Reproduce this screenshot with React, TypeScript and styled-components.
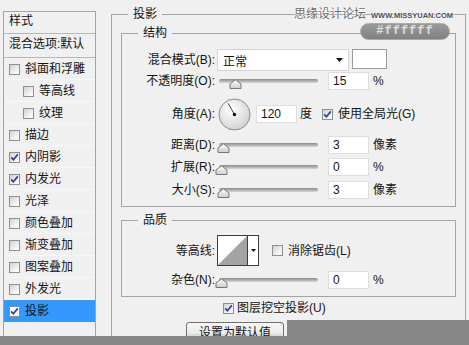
import React from "react";
import styled, { createGlobalStyle } from "styled-components";

const GlobalStyle = createGlobalStyle`
  * { box-sizing: border-box; }
  html, body { margin: 0; padding: 0; background: #f0f0f0; }
  body {
    font-family: "Liberation Sans", "Noto Sans CJK SC", sans-serif;
    font-size: 12px;
    color: #141414;
  }
`;

const Dialog = styled.div`
  position: relative;
  width: 469px;
  height: 345px;
  overflow: hidden;
  display: flex;
  flex-direction: column;
  background: #f0f0f0;
`;

const Body = styled.div`
  display: flex;
  align-items: flex-start;
  height: 336px;
  flex-shrink: 0;
  padding-left: 3px;
  overflow: hidden;
`;

const Footer = styled.div`
  flex: 1;
  background: #878787;
`;

// left list of effects
const EffectList = styled.div`
  flex-shrink: 0;
  width: 93px;
  height: 330px;
  margin-top: 11px;
  border: 1px solid #a3a3a3;
`;

const ListHead = styled.div<{ $h: number }>`
  height: ${(p) => p.$h}px;
  display: flex;
  align-items: center;
  padding: 0 0 3px 5px;
  border-bottom: 1px solid #b8b8b8;
  white-space: nowrap;
  line-height: 14px;
`;

const EffectRow = styled.div<{ $indent?: boolean; $active?: boolean }>`
  height: 22px;
  display: flex;
  align-items: center;
  gap: 5px;
  padding-left: ${(p) => (p.$indent ? 19 : 5)}px;
  background: ${(p) => (p.$active ? "#3399ff" : "transparent")};
  box-shadow: inset 0 -1px 0 ${(p) => (p.$active ? "#3399ff" : "#f7f7f7")};
  white-space: nowrap;
  line-height: 14px;
`;

const Box = styled.span<{ $white?: boolean; $ml?: number }>`
  flex-shrink: 0;
  width: 11px;
  height: 11px;
  margin-left: ${(p) => p.$ml ?? 0}px;
  border: 1px solid #8e8f8f;
  background: ${(p) =>
    p.$white ? "#ffffff" : "linear-gradient(135deg, #d2d2d2 0%, #f4f4f4 70%, #ffffff 100%)"};
  display: flex;
  align-items: center;
  justify-content: center;
`;

const CheckBox = ({ checked, white, ml }: { checked?: boolean; white?: boolean; ml?: number }) => (
  <Box $white={white} $ml={ml}>
    {checked && (
      <svg width="9" height="9" viewBox="0 0 9 9">
        <path d="M1.2 4.4 L3.4 6.8 L7.8 1.4" fill="none" stroke="#2c3f9e" strokeWidth="1.7" />
      </svg>
    )}
  </Box>
);

// right side: layer style options
const Group = styled.fieldset<{ $pad: string; $w: number; $mt?: number; $ml?: number; $h?: number }>`
  margin: ${(p) => p.$mt ?? 0}px 0 0 ${(p) => p.$ml ?? 0}px;
  min-width: 0;
  width: ${(p) => p.$w}px;
  ${(p) => (p.$h ? `height: ${p.$h}px;` : "")}
  flex-shrink: 0;
  border: 1px solid #a4a4a4;
  padding: ${(p) => p.$pad};
`;

const GroupTitle = styled.legend<{ $ml: number }>`
  margin-left: ${(p) => p.$ml}px;
  padding: 0 5px;
  height: 16px;
  line-height: 16px;
  white-space: nowrap;
`;

const FieldRow = styled.div<{ $h: number; $mt?: number }>`
  display: flex;
  align-items: center;
  height: ${(p) => p.$h}px;
  margin-top: ${(p) => p.$mt ?? 0}px;
  white-space: nowrap;
`;

const FieldLabel = styled.span`
  flex-shrink: 0;
  width: 93px;
  margin-right: 2px;
  text-align: right;
  line-height: 14px;
`;

const Select = styled.div`
  flex-shrink: 0;
  width: 132px;
  height: 22px;
  display: flex;
  align-items: center;
  justify-content: space-between;
  padding: 0 5px;
  background: #ffffff;
  border: 1px solid #d4d4d4;
`;

const Swatch = styled.div`
  flex-shrink: 0;
  align-self: flex-start;
  width: 35px;
  height: 20px;
  margin-left: 3px;
  background: #ffffff;
  border: 1px solid #9a9a9a;
`;

const Slider = styled.div`
  position: relative;
  flex-shrink: 0;
  width: 101px;
  height: 18px;
  padding: 7px 0 0 2px;
`;

const Track = styled.div`
  height: 4px;
  border-radius: 2px;
  background: linear-gradient(to bottom, #8a8a8a 0%, #b4b4b4 55%, #d6d6d6 100%);
`;

const ThumbMark = styled.svg`
  position: absolute;
  top: 7px;
`;

const NumberBox = styled.div<{ $ml?: number }>`
  flex-shrink: 0;
  width: 41px;
  height: 18px;
  margin-left: ${(p) => p.$ml ?? 10}px;
  padding-left: 4px;
  line-height: 16px;
  background: #ffffff;
  border: 1px solid #dedede;
  font-family: "Liberation Sans", sans-serif;
`;

const Unit = styled.span<{ $ml?: number }>`
  margin-left: ${(p) => p.$ml ?? 4}px;
  line-height: 14px;
`;

const Dial = styled.svg`
  flex-shrink: 0;
  margin-left: 1px;
`;

const ContourPicker = styled.div`
  flex-shrink: 0;
  display: flex;
  width: 42px;
  height: 31px;
  border: 1px solid #3c3c3c;
  background: #ffffff;
`;

const ContourArrow = styled.div`
  flex: 1;
  display: flex;
  align-items: center;
  justify-content: center;
  border-left: 1px solid #3c3c3c;
`;

const CheckText = styled.span<{ $ml?: number }>`
  margin-left: ${(p) => p.$ml ?? 5}px;
  line-height: 14px;
`;

const KnockoutRow = styled.div`
  display: flex;
  align-items: center;
  height: 14px;
  margin-top: 4px;
  padding-left: 102px;
  white-space: nowrap;
`;

const ButtonRow = styled.div`
  display: flex;
  margin-top: 7px;
  padding-left: 65px;
`;

const Button = styled.div`
  flex-shrink: 0;
  width: 98px;
  height: 23px;
  padding-top: 3px;
  text-align: center;
  line-height: 14px;
  border: 1px solid #707070;
  border-radius: 3px;
  background: linear-gradient(to bottom, #f6f6f6 0%, #ebebeb 50%, #dcdcdc 51%, #cfcfcf 100%);
  white-space: nowrap;
`;

// overlays on the screenshot
const GrayPatch = styled.div`
  position: absolute;
  right: 0;
  top: 320px;
  width: 182px;
  height: 25px;
  background: #878787;
`;

const Watermark = styled.div`
  position: absolute;
  top: 6px;
  left: 294px;
  display: flex;
  flex-direction: column;
`;

const WatermarkLine = styled.div`
  display: flex;
  align-items: center;
  height: 16px;
  white-space: nowrap;
`;

const SiteName = styled.span`
  color: #6c6c6c;
  font-size: 12px;
  line-height: 16px;
  text-shadow: 0 0 1px #fff, 0 0 2px #fff, 0 0 2px #fff;
`;

const SiteUrl = styled.span`
  margin: 3px 0 0 5px;
  color: #4e4e4e;
  font-family: "Liberation Sans", sans-serif;
  font-size: 7.5px;
  font-weight: bold;
  text-shadow: 0 0 1px #fff, 0 0 2px #fff, 0 0 2px #fff;
`;

const ColorPill = styled.div`
  margin: 1px 0 0 66px;
  width: 90px;
  height: 17px;
  border-radius: 9px;
  border: 1px solid #a9a9a9;
  background: linear-gradient(to bottom, #9a9a9a, #818181);
  color: #dedede;
  font-family: "Liberation Mono", monospace;
  font-weight: bold;
  font-size: 12px;
  letter-spacing: 1px;
  line-height: 15px;
  text-align: center;
`;

const Thumb = ({ pos }: { pos: number }) => (
  <ThumbMark width="13" height="10" viewBox="0 0 13 10" style={{ left: pos }}>
    <defs>
      <linearGradient id="thumbFill" x1="0" y1="0" x2="0" y2="1">
        <stop offset="0" stopColor="#ffffff" />
        <stop offset="1" stopColor="#cdcdcd" />
      </linearGradient>
    </defs>
    <path d="M6.5 0.8 L12 5 L12 9.5 L1 9.5 L1 5 Z" fill="url(#thumbFill)" stroke="#787878" />
  </ThumbMark>
);

const SliderField = ({ pos }: { pos: number }) => (
  <Slider>
    <Track />
    <Thumb pos={pos} />
  </Slider>
);

const effects: { name: string; checked?: boolean; indent?: boolean; active?: boolean }[] = [
  { name: "斜面和浮雕" },
  { name: "等高线", indent: true },
  { name: "纹理", indent: true },
  { name: "描边" },
  { name: "内阴影", checked: true },
  { name: "内发光", checked: true },
  { name: "光泽" },
  { name: "颜色叠加" },
  { name: "渐变叠加" },
  { name: "图案叠加" },
  { name: "外发光" },
  { name: "投影", checked: true, active: true },
];

export default function App() {
  return (
    <>
      <GlobalStyle />
      <Dialog>
        <Body>
          <EffectList>
            <ListHead $h={22}>样式</ListHead>
            <ListHead $h={24}>混合选项:默认</ListHead>
            {effects.map((e) => (
              <EffectRow key={e.name} $indent={e.indent} $active={e.active}>
                <CheckBox checked={e.checked} white={e.active} />
                {e.name}
              </EffectRow>
            ))}
          </EffectList>

          <Group $w={355} $h={345} $ml={15} $mt={6} $pad="3px 9px 0 9px">
            <GroupTitle $ml={7}>投影</GroupTitle>

            <Group $w={335} $pad="8px 0 7px 0">
              <GroupTitle $ml={16}>结构</GroupTitle>
              <FieldRow $h={22}>
                <FieldLabel>混合模式(B):</FieldLabel>
                <Select>
                  <span>正常</span>
                  <svg width="7" height="4" viewBox="0 0 7 4">
                    <path d="M0 0 H7 L3.5 4 Z" fill="#111" />
                  </svg>
                </Select>
                <Swatch />
              </FieldRow>
              <FieldRow $h={18} $mt={1}>
                <FieldLabel>不透明度(O):</FieldLabel>
                <SliderField pos={12} />
                <NumberBox>15</NumberBox>
                <Unit>%</Unit>
              </FieldRow>
              <FieldRow $h={34} $mt={7}>
                <FieldLabel>角度(A):</FieldLabel>
                <Dial width="33" height="33" viewBox="0 0 33 33">
                  <defs>
                    <radialGradient id="dialFill" cx="40%" cy="35%" r="75%">
                      <stop offset="0" stopColor="#ffffff" />
                      <stop offset="1" stopColor="#cdcdcd" />
                    </radialGradient>
                  </defs>
                  <circle cx="16.5" cy="16.5" r="15.5" fill="url(#dialFill)" stroke="#8a8a8a" />
                  <line x1="16.5" y1="16.5" x2="10.2" y2="5.4" stroke="#3a3a3a" strokeWidth="1" />
                  <circle cx="16.5" cy="16.5" r="1.7" fill="#111" />
                </Dial>
                <NumberBox $ml={5}>120</NumberBox>
                <Unit $ml={3}>度</Unit>
                <CheckBox checked ml={10} />
                <CheckText>使用全局光(G)</CheckText>
              </FieldRow>
              <FieldRow $h={18} $mt={5}>
                <FieldLabel>距离(D):</FieldLabel>
                <SliderField pos={0} />
                <NumberBox>3</NumberBox>
                <Unit>像素</Unit>
              </FieldRow>
              <FieldRow $h={18} $mt={4}>
                <FieldLabel>扩展(R):</FieldLabel>
                <SliderField pos={-2} />
                <NumberBox>0</NumberBox>
                <Unit>%</Unit>
              </FieldRow>
              <FieldRow $h={18} $mt={5}>
                <FieldLabel>大小(S):</FieldLabel>
                <SliderField pos={0} />
                <NumberBox>3</NumberBox>
                <Unit>像素</Unit>
              </FieldRow>
            </Group>

            <Group $w={335} $mt={5} $pad="7px 0 7px 0">
              <GroupTitle $ml={16}>品质</GroupTitle>
              <FieldRow $h={31}>
                <FieldLabel>等高线:</FieldLabel>
                <ContourPicker>
                  <svg width="29" height="29" viewBox="0 0 29 29">
                    <path d="M0 29 L29 0 L29 29 Z" fill="#a3a3a3" />
                  </svg>
                  <ContourArrow>
                    <svg width="5" height="3" viewBox="0 0 5 3">
                      <path d="M0 0 H5 L2.5 3 Z" fill="#111" />
                    </svg>
                  </ContourArrow>
                </ContourPicker>
                <CheckBox ml={13} />
                <CheckText>消除锯齿(L)</CheckText>
              </FieldRow>
              <FieldRow $h={18} $mt={5}>
                <FieldLabel>杂色(N):</FieldLabel>
                <SliderField pos={-2} />
                <NumberBox>0</NumberBox>
                <Unit>%</Unit>
              </FieldRow>
            </Group>

            <KnockoutRow>
              <CheckBox checked />
              <CheckText $ml={3}>图层挖空投影(U)</CheckText>
            </KnockoutRow>
            <ButtonRow>
              <Button>设置为默认值</Button>
            </ButtonRow>
          </Group>
        </Body>
        <Footer />

        <GrayPatch />
        <Watermark>
          <WatermarkLine>
            <SiteName>思缘设计论坛</SiteName>
            <SiteUrl>WWW.MISSYUAN.COM</SiteUrl>
          </WatermarkLine>
          <ColorPill>#ffffff</ColorPill>
        </Watermark>
      </Dialog>
    </>
  );
}
